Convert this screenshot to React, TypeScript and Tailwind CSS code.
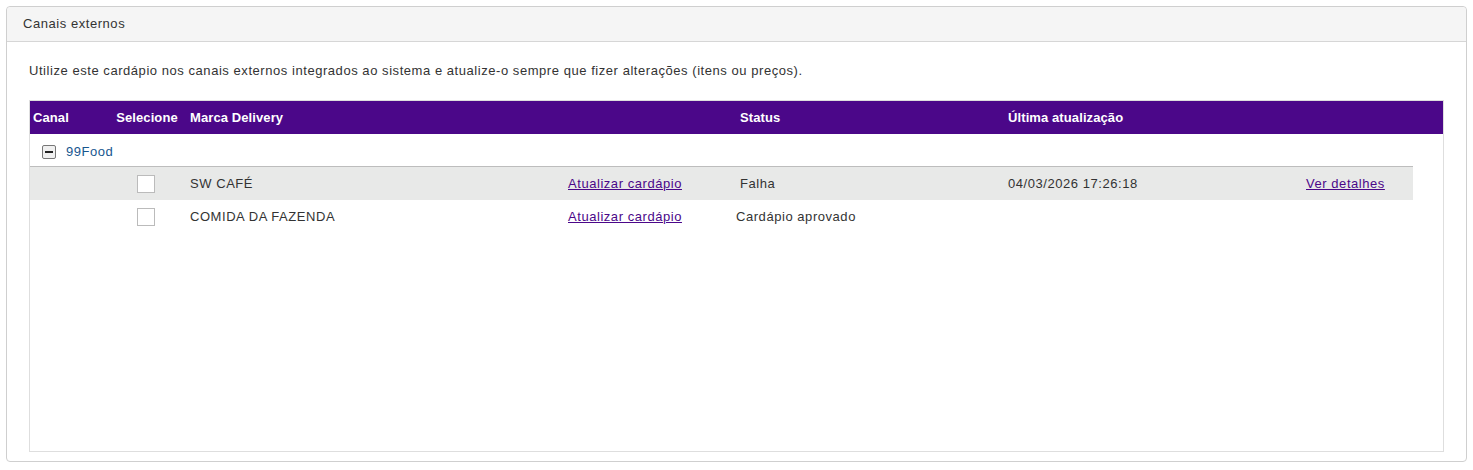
import React from "react";

type Row = {
  marca: string;
  status: string;
  statusClass: string;
  data?: string;
  highlight?: boolean;
};

const rows: Row[] = [
  { marca: "SW CAFÉ", status: "Falha", statusClass: "pl-1", data: "04/03/2026 17:26:18", highlight: true },
  { marca: "COMIDA DA FAZENDA", status: "Cardápio aprovado", statusClass: "pl-0" },
];

const cols = "grid grid-cols-[84px_72px_378px_172px_268px_298px_111px]";

const App: React.FC = () => {
  return (
    <div className="min-h-[470px] bg-white px-[6px] pt-[6px] pb-[9px] font-['Liberation_Sans',Arial,sans-serif] text-[13px] tracking-[0.55px] text-[#333]">
      <div className="rounded-[4px] border border-[#cfcfcf] bg-white">
        {/* cabeçalho do painel */}
        <div className="flex h-[35px] items-center rounded-t-[4px] border-b border-[#d6d6d6] bg-[#f5f5f5] px-4">
          Canais externos
        </div>

        <div className="px-[22px] pb-[9px]">
          <p className="pt-[20px] pb-[20px] leading-[18px]">
            Utilize este cardápio nos canais externos integrados ao sistema e atualize-o sempre que fizer alterações (itens ou preços).
          </p>

          <div className="h-[352px] border border-[#dedede]">
            {/* cabeçalho da tabela */}
            <div className="flex h-[33px] items-center bg-[#4b0789] font-bold tracking-[0.1px] text-white">
              <div className={cols}>
                <div className="pl-[3px]">Canal</div>
                <div className="pr-[6px] text-center">Selecione</div>
                <div className="pl-1">Marca Delivery</div>
                <div />
                <div className="pl-1">Status</div>
                <div className="pl-1">Última atualização</div>
                <div />
              </div>
            </div>

            <div className="w-[1383px]">
              {/* grupo do canal */}
              <div className="flex h-[33px] items-center border-b border-[#bdbdbd] pt-[3px] pl-3">
                <span className="mr-[10px] flex h-[14px] w-[14px] items-center justify-center rounded-[2px] border border-[#777] bg-[#f0f0f0]">
                  <span className="h-[2px] w-[8px] bg-[#222]" />
                </span>
                <span className="text-[#17568f]">99Food</span>
              </div>

              {rows.map((row) => (
                <div
                  key={row.marca}
                  className={`${cols} h-[33px] items-center ${row.highlight ? "bg-[#e8e9e8]" : "bg-white"}`}
                >
                  <div />
                  <div className="flex justify-center pr-[8px]">
                    <span className="h-[18px] w-[18px] border border-[#bbb] bg-white" />
                  </div>
                  <div className="pl-1">{row.marca}</div>
                  <div className="pl-1">
                    <a href="#" className="text-[#4b0789] underline">
                      Atualizar cardápio
                    </a>
                  </div>
                  <div className={row.statusClass}>{row.status}</div>
                  <div className="pl-1">{row.data}</div>
                  <div className="pl-1">
                    {row.data && (
                      <a href="#" className="text-[#4b0789] underline">
                        Ver detalhes
                      </a>
                    )}
                  </div>
                </div>
              ))}
            </div>
          </div>
        </div>
      </div>
    </div>
  );
};

export default App;
